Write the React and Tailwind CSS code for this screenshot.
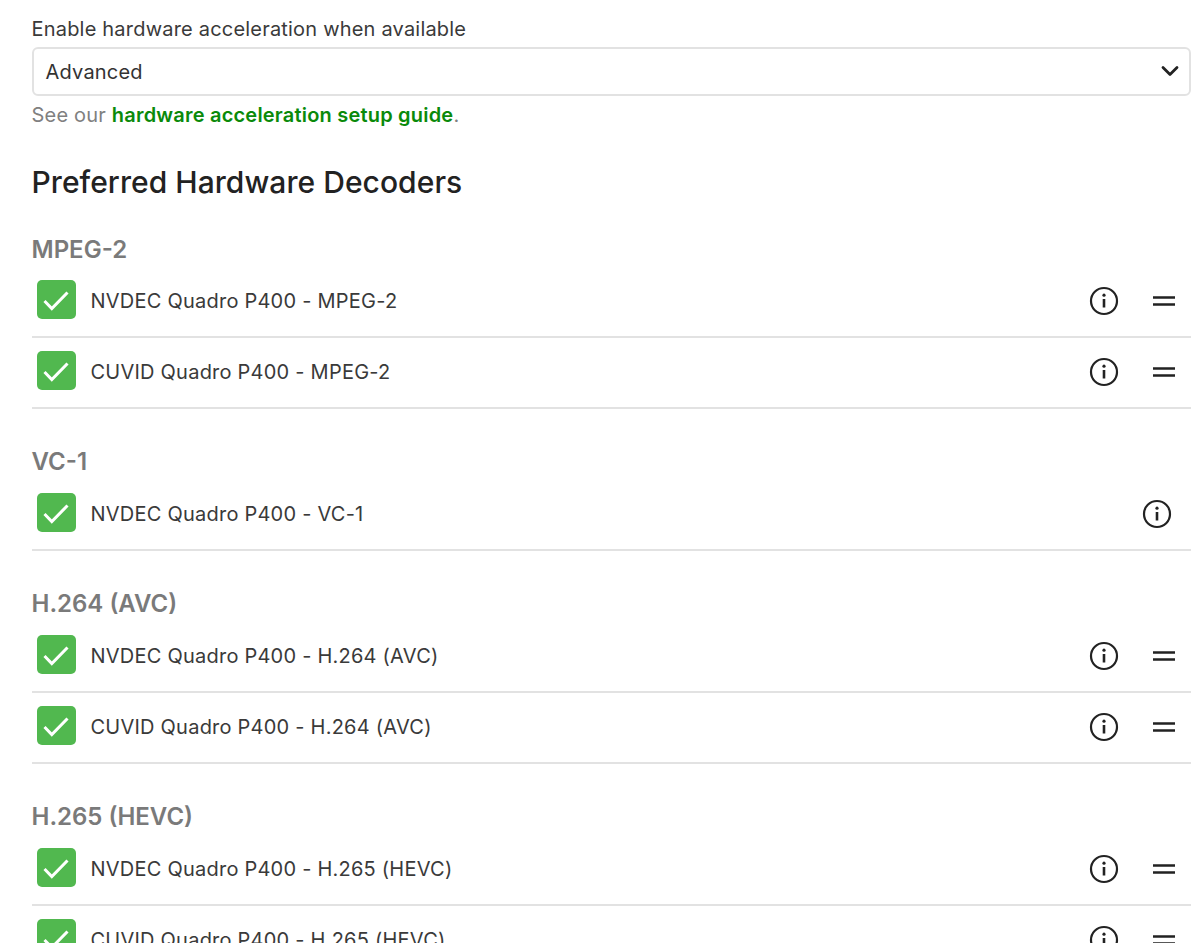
import { ChevronDown } from 'lucide-react';

const groups = [
	{
		name: 'MPEG-2',
		rows: ['NVDEC Quadro P400 - MPEG-2', 'CUVID Quadro P400 - MPEG-2'],
	},
	{
		name: 'VC-1',
		rows: ['NVDEC Quadro P400 - VC-1'],
	},
	{
		name: 'H.264 (AVC)',
		rows: ['NVDEC Quadro P400 - H.264 (AVC)', 'CUVID Quadro P400 - H.264 (AVC)'],
	},
	{
		name: 'H.265 (HEVC)',
		rows: ['NVDEC Quadro P400 - H.265 (HEVC)', 'CUVID Quadro P400 - H.265 (HEVC)'],
	},
];

const Check = () => (
	<span className="-mt-[3px] flex h-[39px] w-[39px] shrink-0 items-center justify-center rounded-[5px] bg-[#51b84f]">
		<svg width="27" height="27" viewBox="0 0 27 27" fill="none">
			<path d="M1.5 15 L8.8 22.5 L24.5 6.5" stroke="#fff" strokeWidth="3" />
		</svg>
	</span>
);

const Info = () => (
	<svg width="30" height="30" viewBox="0 0 30 30" fill="none">
		<circle cx="15" cy="15" r="13" stroke="#222" strokeWidth="2.2" />
		<circle cx="15" cy="9.2" r="1.6" fill="#222" />
		<path d="M15 13 V21.5" stroke="#222" strokeWidth="2.6" />
	</svg>
);

const Handle = () => (
	<svg width="24" height="12" viewBox="0 0 24 12" fill="none">
		<path d="M1 2.5 H23 M1 9.5 H23" stroke="#222" strokeWidth="2.6" />
	</svg>
);

const Row = ({ label, single }) => (
	<div className="flex h-[71px] items-center border-b-2 border-[#e2e2e2] pb-[2px] pl-[5px]">
		<Check />
		<span className="ml-[15px] flex-1 text-[20px] tracking-[0.23px] text-[#3a3a3a]">{label}</span>
		<Info />
		{!single && (
			<span className="ml-[33.5px] mr-[15px] flex">
				<Handle />
			</span>
		)}
		{single && <span className="mr-[19px]" />}
	</div>
);

const App = () => {
	return (
		<div className="h-[943px] overflow-hidden bg-white pl-[31.5px] pr-[9px] font-['Inter',sans-serif]">
			<div className="pt-[16px] text-[20px] leading-[26px] tracking-[0.2px] text-[#3a3a3a]">
				Enable hardware acceleration when available
			</div>
			<div className="mt-[5px] flex h-[49px] items-center justify-between rounded-[6px] border-2 border-[#e2e2e2] pt-[1px] pl-[12px] pr-[5px] text-[20px] tracking-[0.2px] text-[#333]">
				Advanced
				<ChevronDown size={28} strokeWidth={2.4} color="#222" className="-mt-[2px]" />
			</div>
			<p className="mt-[6px] text-[20px] leading-[26px] tracking-[0.2px] text-[#808080]">
				See our <a className="font-semibold text-[#0a8a0a]">hardware acceleration setup guide</a>.
			</p>
			<h2 className="mt-[34px] text-[30px] leading-[40px] font-medium tracking-[0.05px] text-[#222]">
				Preferred Hardware Decoders
			</h2>
			{groups.map((group, i) => (
				<section key={group.name} className={i === 0 ? 'mt-[30px]' : 'mt-[35px]'}>
					<h3 className={i === 0 ? 'text-[24px] leading-[35px] font-semibold text-[#7a7a7a]' : 'mb-[1px] text-[24px] leading-[35px] font-semibold text-[#7a7a7a]'}>
						{group.name}
					</h3>
					{group.rows.map((row) => (
						<Row key={row} label={row} single={group.rows.length === 1} />
					))}
				</section>
			))}
		</div>
	);
};

export default App;
